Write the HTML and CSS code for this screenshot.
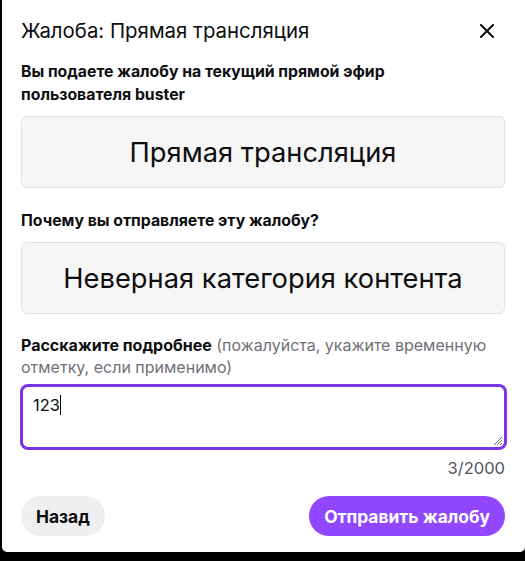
FILE: index.html
```html
<!DOCTYPE html>
<html lang="ru">
<head>
<meta charset="utf-8">
<link rel="stylesheet" href="styles.css">
</head>
<body>
<div class="modal">
  <div class="header">
    <h1 class="title">Жалоба: Прямая трансляция</h1>
    <button class="close" aria-label="Закрыть">
      <svg width="14" height="14" viewBox="0 0 14 14"><path d="M1 1L13 13M13 1L1 13" stroke="#0e0e10" stroke-width="2" stroke-linecap="square"/></svg>
    </button>
  </div>
  <p class="lead">Вы подаете жалобу на текущий прямой эфир пользователя buster</p>
  <div class="choice">Прямая трансляция</div>
  <p class="q">Почему вы отправляете эту жалобу?</p>
  <div class="choice">Неверная категория контента</div>
  <p class="details"><b>Расскажите подробнее</b> (пожалуйста, укажите временную отметку, если применимо)</p>
  <div class="ta"><span class="val">123</span><span class="caret"></span>
    <svg class="grip" width="12" height="12" viewBox="0 0 12 12"><path d="M11 3L3 11M11 6L6 11M11 9L9 11" stroke="#666" stroke-width="1"/></svg>
  </div>
  <div class="count">3/2000</div>
  <div class="footer">
    <button class="btn back">Назад</button>
    <button class="btn send">Отправить жалобу</button>
  </div>
</div>
</body>
</html>
```
FILE: styles.css
```css
html, body { margin: 0; padding: 0; background: #000; }
body { font-family: Inter, "Noto Sans", sans-serif; color: #0e0e10; }
.modal {
  margin-left: 2px;
  width: 523px;
  height: 552px;
  background: #fff;
  border-radius: 0 0 5px 5px;
  box-sizing: border-box;
  padding: 17px 20px 0 19px;
}
.header { display: flex; justify-content: space-between; align-items: center; height: 28px; }
.title { margin: 0; font-size: 20.4px; font-weight: 400; line-height: 28px; }
.close { border: 0; background: none; padding: 0; margin-right: 11px; width: 14px; height: 14px; display: flex; }
.lead { margin: 15px 0 0; font-size: 15.8px; font-weight: 700; line-height: 23px; width: 420px; }
.q { margin: 21px 0 0; font-size: 15.8px; font-weight: 700; line-height: 23px; }
.choice {
  margin-top: 10px;
  height: 72px;
  box-sizing: border-box;
  background: #f6f6f6;
  border: 1px solid #e2e2e2;
  border-radius: 6px;
  display: flex; align-items: center; justify-content: center;
  font-size: 27.3px;
}
.details { margin: 20px 0 0; font-size: 16px; line-height: 22px; color: #707078; }
.details b { color: #0e0e10; font-weight: 700; }
.ta {
  position: relative;
  margin: 6px -2px 0 -1px;
  height: 66px;
  box-sizing: border-box;
  border: 3px solid #7a33e6;
  border-radius: 8px;
  padding: 7px 10px;
  font-size: 16.4px;
  line-height: 22px;
  display: flex; align-items: flex-start;
}
.caret { display: inline-block; width: 1px; height: 20px; background: #000; margin-top: 1px; }
.grip { position: absolute; right: 1px; bottom: 1px; }
.count { margin-top: 9px; text-align: right; font-size: 16.5px; color: #53535f; line-height: 18px; padding-right: 0; }
.footer { display: flex; justify-content: space-between; margin-top: 19px; }
.btn {
  border: 0; border-radius: 20px; height: 40px; padding: 0 15px;
  font-family: Inter, "Noto Sans", sans-serif; font-size: 17.4px; font-weight: 700;
}
.back { background: #efeff1; color: #0e0e10; }
.send { background: #9147ff; color: #fff; }
```
